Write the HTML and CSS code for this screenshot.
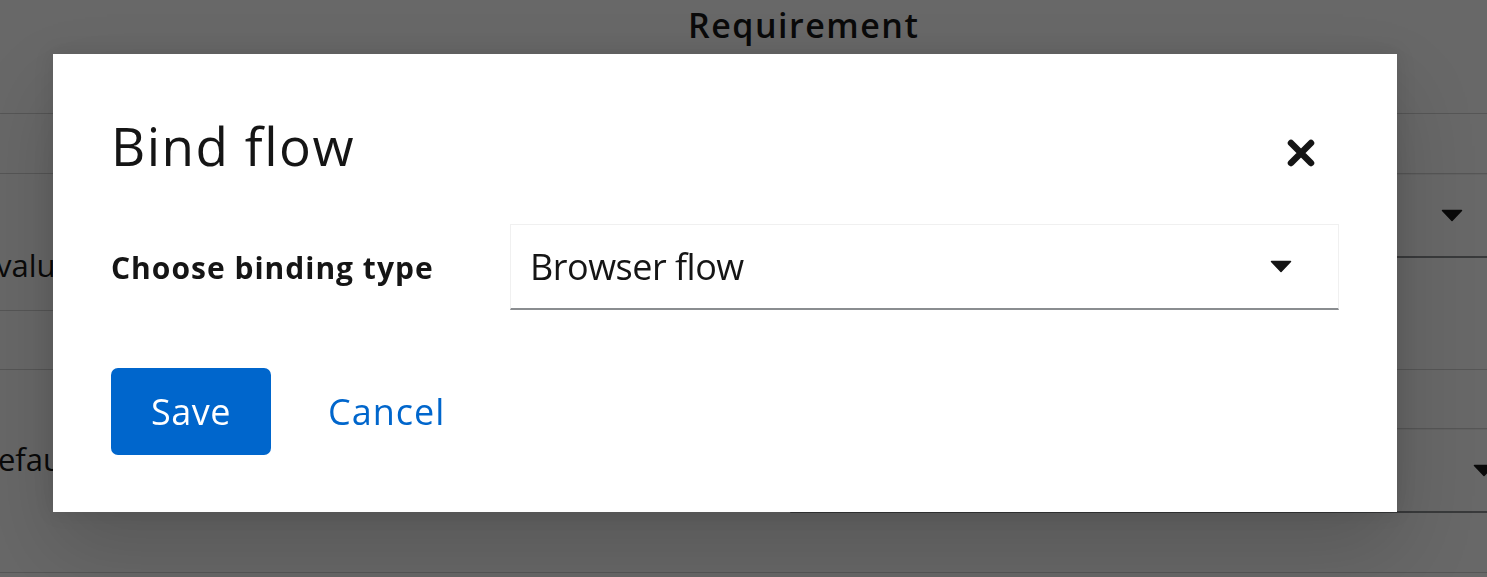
FILE: index.html
```html
<!DOCTYPE html>
<html lang="en">
<head>
<meta charset="utf-8">
<title>Bind flow</title>
<link rel="stylesheet" href="styles.css">
</head>
<body>
  <div class="page">
    <div class="page-head"><span class="col-title">Requirement</span></div>
    <div class="cols">
      <div class="col col-left">
        <div class="cell cell-60"></div>
        <div class="cell cell-137"><span class="cell-text cut-v">value</span></div>
        <div class="cell cell-59"></div>
        <div class="cell cell-203"><span class="cell-text cut-d">default</span></div>
      </div>
      <div class="col col-right">
        <div class="cell cell-60"></div>
        <div class="cell cell-196">
          <div class="bg-select bg-select-a">
            <svg class="caret" viewBox="0 0 22 13" width="22" height="13"><path d="M1.5 1.5 H20.5 L11 11.5 Z"/></svg>
          </div>
        </div>
        <div class="cell cell-59"></div>
        <div class="cell cell-144">
          <div class="bg-select bg-select-b">
            <svg class="caret" viewBox="0 0 22 13" width="22" height="13"><path d="M1.5 1.5 H20.5 L11 11.5 Z"/></svg>
          </div>
        </div>
      </div>
    </div>
  </div>

  <div class="backdrop">
    <div class="modal" role="dialog" aria-labelledby="modal-title">
      <header class="modal-header">
        <h1 class="modal-title" id="modal-title">Bind flow</h1>
        <button class="close-btn" aria-label="Close">
          <svg viewBox="0 0 28 28" width="28" height="28"><path d="M4 4 L24 24 M24 4 L4 24"/></svg>
        </button>
      </header>
      <div class="modal-body">
        <div class="form-row">
          <label class="form-label">Choose binding type</label>
          <div class="select">
            <span class="select-text">Browser flow</span>
            <svg class="caret" viewBox="0 0 22 13" width="22" height="13"><path d="M1.5 1.5 H20.5 L11 11.5 Z"/></svg>
          </div>
        </div>
      </div>
      <footer class="modal-footer">
        <button class="btn btn-primary">Save</button>
        <button class="btn btn-link">Cancel</button>
      </footer>
    </div>
  </div>
</body>
</html>
```

FILE: styles.css
```css
html, body {
  margin: 0;
  padding: 0;
  overflow: hidden;
  background: #ffffff;
  font-family: "Open Sans", "Liberation Sans", sans-serif;
  color: #151515;
}

/* ---------- page behind the modal ---------- */
.page {
  width: 1487px;
  height: 577px;
}

.page-head {
  height: 114px;
  box-sizing: border-box;
  border-bottom: 1px solid #d2d2d2;
  padding-left: 688px;
  padding-top: 3px;
}

.col-title {
  font-size: 34px;
  font-weight: 600;
  letter-spacing: 1.5px;
  line-height: 44px;
}

.cols {
  display: flex;
}

.col {
  display: flex;
  flex-direction: column;
}

.col-left {
  width: 760px;
}

.col-right {
  flex: 1;
  min-width: 0;
}

.cell {
  box-sizing: border-box;
  border-bottom: 1px solid #d2d2d2;
  overflow: hidden;
}

.cell-60 { height: 60px; }
.cell-137 { height: 137px; }
.cell-59 { height: 59px; }
.cell-203 { height: 203px; }
.cell-196 { height: 196px; }
.cell-144 { height: 144px; }

.cell-text {
  display: block;
  font-size: 31px;
  line-height: 40px;
}

.cut-v {
  padding-top: 71px;
  text-indent: -4px;
}

.cut-d {
  padding-top: 69px;
  text-indent: -21px;
}

.bg-select {
  box-sizing: border-box;
  height: 84px;
  margin-left: 30px;
  border: 1px solid #f0f0f0;
  border-bottom: 2px solid #8a8d90;
  display: flex;
  align-items: center;
  justify-content: flex-end;
  padding-right: 46px;
}

.bg-select-a { width: 720px; }
.bg-select-b { width: 752px; }

.caret {
  display: block;
  flex: none;
}

.caret path {
  fill: #151515;
  stroke: #151515;
  stroke-width: 1.5;
  stroke-linejoin: round;
}

/* ---------- backdrop + modal ---------- */
.backdrop {
  position: fixed;
  inset: 0;
  background: rgba(3, 3, 3, 0.6);
  display: flex;
  align-items: flex-start;
  justify-content: flex-start;
  padding: 54px 0 0 53px;
}

.modal {
  width: 1344px;
  box-sizing: border-box;
  background: #ffffff;
  padding: 58px 58px 57px 58px;
  box-shadow: 0 38px 77px 0 rgba(3, 3, 3, 0.16), 0 0 19px 0 rgba(3, 3, 3, 0.1);
}

.modal-header {
  display: flex;
  justify-content: space-between;
  align-items: flex-start;
}

.modal-title {
  margin: 0;
  font-size: 53px;
  font-weight: 400;
  line-height: 68px;
  letter-spacing: 1.5px;
  color: #151515;
}

.close-btn {
  width: 76px;
  height: 48px;
  margin-top: 17px;
  padding: 0;
  border: none;
  background: none;
  display: flex;
  align-items: center;
  justify-content: center;
  cursor: pointer;
}

.close-btn svg {
  display: block;
}

.close-btn path {
  stroke: #151515;
  stroke-width: 6.5;
  stroke-linecap: round;
  fill: none;
}

.modal-body {
  margin-top: 44px;
}

.form-row {
  display: flex;
  align-items: center;
  gap: 38px;
}

.form-label {
  width: 361px;
  flex: none;
  font-size: 30px;
  font-weight: 700;
  letter-spacing: 1px;
  color: #151515;
}

.select {
  flex: 1;
  height: 86px;
  box-sizing: border-box;
  border: 1px solid #f0f0f0;
  border-bottom: 2px solid #8a8d90;
  display: flex;
  align-items: center;
  justify-content: space-between;
  padding: 0 46px 0 19px;
}

.select-text {
  font-size: 36px;
  letter-spacing: -0.5px;
  color: #151515;
}

.modal-footer {
  margin-top: 58px;
  display: flex;
  align-items: center;
  gap: 38px;
}

.btn {
  height: 87px;
  border: none;
  border-radius: 7px;
  font-family: "Open Sans", "Liberation Sans", sans-serif;
  font-size: 36px;
  cursor: pointer;
  background: none;
}

.btn-primary {
  width: 160px;
  background: #0066cc;
  color: #ffffff;
  padding: 0;
  letter-spacing: 0.5px;
}

.btn-link {
  color: #0066cc;
  padding: 0 21px;
  margin-left: -2px;
  letter-spacing: 1px;
}
```
